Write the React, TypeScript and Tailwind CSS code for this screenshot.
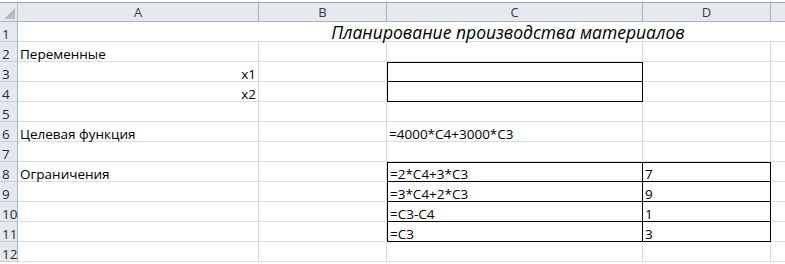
const cols = ['A', 'B', 'C', 'D', ''];

type Cell = { text?: string; align?: 'left' | 'right'; cls?: string };

const rows: Cell[][] = [
  [{}, {}, {}, {}, {}],
  [{ text: 'Переменные' }, {}, {}, {}, {}],
  [{ text: 'x1', align: 'right' }, {}, { cls: 'border-t border-l border-r border-b border-black' }, {}, {}],
  [{ text: 'x2', align: 'right' }, {}, { cls: 'border-l border-r border-b border-black' }, {}, {}],
  [{}, {}, {}, {}, {}],
  [{ text: 'Целевая функция' }, {}, { text: '=4000*C4+3000*C3' }, {}, {}],
  [{}, {}, {}, {}, {}],
  [{ text: 'Ограничения' }, {}, { text: '=2*C4+3*C3', cls: 'border-t border-l border-r border-black' }, { text: '7', cls: 'border-t border-r border-black' }, {}],
  [{}, {}, { text: '=3*C4+2*C3', cls: 'border-l border-r border-black' }, { text: '9', cls: 'border-r border-black' }, {}],
  [{}, {}, { text: '=C3-C4', cls: 'border-l border-r border-black' }, { text: '1', cls: 'border-r border-black' }, {}],
  [{}, {}, { text: '=C3', cls: 'border-l border-r border-b border-black' }, { text: '3', cls: 'border-r border-b border-black' }, {}],
  [{}, {}, {}, {}, {}],
];

export default function App() {
  return (
    <div className="w-[785px] h-[264px] overflow-hidden bg-white pt-[2px] text-[13.5px] text-black" style={{ fontFamily: '"Open Sans", "Noto Sans", sans-serif' }}>
      <div className="grid grid-cols-[18px_241px_128px_256px_128px_40px] grid-rows-[20px]">
        {/* header row */}
        <div className="relative h-[20px] bg-[#e4e9f0] border-t border-[#9aa3ad] border-b border-b-[#9eb6ce] border-r border-r-[#b8c0ca]">
          <div className="absolute right-[2px] bottom-[2px] w-0 h-0 border-l-[11px] border-l-transparent border-b-[11px] border-b-[#b5bcc4]" />
        </div>
        {cols.map((c, i) => (
          <div key={i} className="h-[20px] bg-[#e4e9f0] border-t border-[#9aa3ad] border-b border-b-[#9eb6ce] border-r border-r-[#a8b0ba] flex items-center justify-center text-[13px] text-[#3a3a3a] leading-none">
            {c}
          </div>
        ))}

        {rows.map((r, ri) => (
          <Row key={ri} n={ri + 1} cells={r} />
        ))}
      </div>
    </div>
  );
}

function Row({ n, cells }: { n: number; cells: Cell[] }) {
  return (
    <>
      <div className="h-[20px] bg-[#e4e9f0] border-b border-[#c5cdd6] border-r border-r-[#9eb6ce] flex items-end pl-[2px] text-[13.5px] text-[#2b2b2b] leading-none">
        {n}
      </div>
      {cells.map((c, i) => (
        <div
          key={i}
          className={`relative h-[20px] border-b border-[#dadcdd] flex items-end px-[2px] whitespace-nowrap leading-none ${n === 1 && i < 4 ? '' : 'border-r'} ${c.align === 'right' ? 'justify-end' : ''} ${c.cls ?? ''}`}
        >
          {n === 1 && i === 2 ? (
            <span className="absolute left-1/2 -translate-x-[52%] bottom-0 text-[17.5px] leading-[17px] italic z-10">
              Планирование производства материалов
            </span>
          ) : (
            c.text
          )}
        </div>
      ))}
    </>
  );
}
